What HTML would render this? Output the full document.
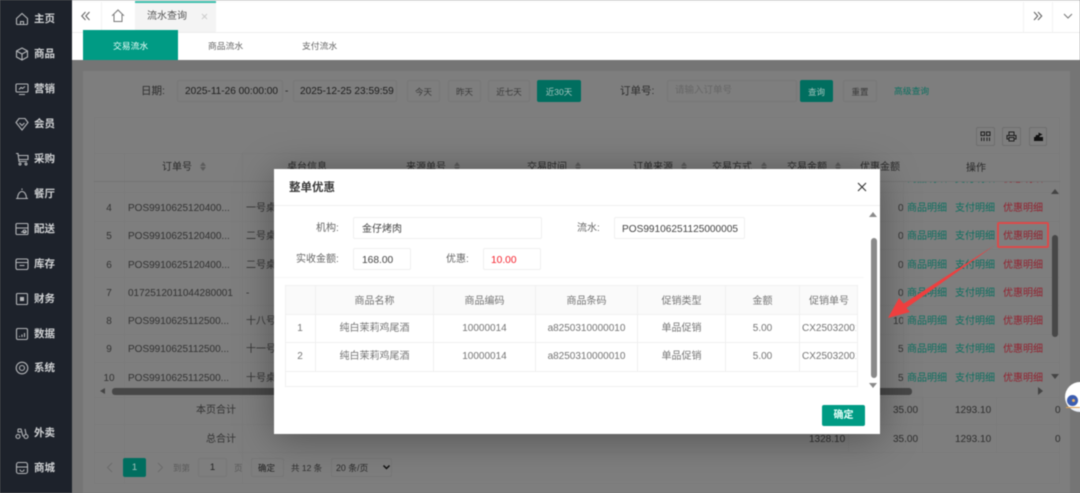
<!DOCTYPE html>
<html lang="zh"><head><meta charset="utf-8"><title>流水查询</title>
<style>
*{box-sizing:border-box;margin:0;padding:0}
html,body{width:1080px;height:493px;overflow:hidden;background:#767676}
body{position:relative;font-family:"Liberation Sans","Noto Sans CJK SC",sans-serif;font-size:10px;color:#2c2c2c;filter:blur(.5px)}
.a{position:absolute}
.t{position:absolute;white-space:nowrap;line-height:14px;height:14px;margin-top:1px}
.c{position:absolute;white-space:nowrap;text-align:center;line-height:14px;height:14px;margin-top:1px}
.box{position:absolute;border:1px solid #777;border-radius:2px}
.l{position:absolute;background:#7a7a7a}
.s{position:absolute;left:0;top:0;width:72px;height:493px;background:#1d222b}
.n{position:absolute;left:34px;color:#d0d2d4;font-size:10.5px;font-weight:bold;line-height:14px;white-space:nowrap}
.s svg{position:absolute;left:15px;width:14px;height:14px;fill:none;stroke:#b4b6b9;stroke-width:1.1}
.g{color:#0d6f60}.r{color:#92222f}
.m .t,.m .c{color:#757575;margin-top:2px}
.rw .t,.rw .c,.d{margin-top:2px!important}
.m .box{border-color:#f0f0f0}
.m .l{background:#f0f0f0}
.sort{position:absolute;width:0;height:0;border-left:3px solid transparent;border-right:3px solid transparent;border-bottom:4px solid #5c5c5c;margin-top:-1px}
.sort:after{content:"";position:absolute;left:-3px;top:5px;width:0;height:0;border-left:3px solid transparent;border-right:3px solid transparent;border-top:4px solid #5c5c5c}
</style></head><body>

<!-- top bars -->
<div class="a" style="left:72px;top:0;width:1008px;height:60px;background:#fff"></div>
<div class="a" style="left:72px;top:32px;width:1008px;height:1px;background:#eee"></div>
<div class="a" style="left:72px;top:1px;width:1008px;height:1px;background:#f7f7f7"></div>
<div class="a" style="left:101px;top:2px;width:1px;height:30px;background:#f3f3f3"></div>
<svg class="a" style="left:80px;top:10px" width="12" height="12" fill="none" stroke="#666" stroke-width="1.1"><path d="M5.5 2 1.8 6l3.7 4M9.5 2 5.8 6l3.7 4"/></svg>
<svg class="a" style="left:111px;top:9px" width="14" height="14" fill="none" stroke="#777" stroke-width="1"><path d="M1 6.8 7 1l6 5.8M3 5.5V12.500h8V5.500"/></svg>
<div class="a" style="left:135px;top:1px;width:81px;height:31px;background:#f4f4f4;border-top:2px solid #3cbcaa"></div>
<div class="t" style="left:147px;top:9px;color:#555;font-size:10px">流水查询</div>
<svg class="a" style="left:201px;top:13px" width="7" height="7" stroke="#ccc" stroke-width="1"><path d="M1 1l5 5M6 1 1 6"/></svg>
<div class="a" style="left:1023px;top:2px;width:1px;height:30px;background:#f3f3f3"></div>
<div class="a" style="left:1052px;top:2px;width:1px;height:30px;background:#f3f3f3"></div>
<svg class="a" style="left:1032px;top:10px" width="12" height="12" fill="none" stroke="#666" stroke-width="1.1"><path d="M2 2l3.700 4L2 10M6 2l3.700 4L6 10"/></svg>
<svg class="a" style="left:1062px;top:12px" width="12" height="8" fill="none" stroke="#777" stroke-width="1"><path d="M2 2l4 4 4-4"/></svg>
<div class="a" style="left:83px;top:30px;width:95px;height:30px;background:#009b84"></div>
<div class="t" style="left:113px;top:38px;color:#eafff9;font-size:8.800px">交易流水</div>
<div class="t" style="left:208px;top:38px;color:#666;font-size:8.800px">商品流水</div>
<div class="t" style="left:302px;top:38px;color:#666;font-size:8.800px">支付流水</div>

<!-- page -->
<div class="a" style="left:72px;top:60px;width:1008px;height:433px;background:#757575"></div>
<div class="a" style="left:83px;top:71px;width:987px;height:422px;background:#7e7e7e"></div>
<div class="t" style="left:141px;top:83px;font-size:10.500px;color:#2c2c2c">日期:</div>
<div class="box" style="left:177px;top:80px;width:106px;height:22px"></div>
<div class="t" style="left:185px;top:83.500px;font-size:10.100px;color:#1c1c1c">2025-11-26 00:00:00</div>
<div class="t" style="left:285px;top:83.500px;color:#222">-</div>
<div class="box" style="left:293px;top:80px;width:104px;height:22px"></div>
<div class="t" style="left:300px;top:83.500px;font-size:10.100px;color:#1c1c1c">2025-12-25 23:59:59</div>
<div class="box" style="left:407px;top:80px;width:33px;height:22px"></div><div class="c" style="left:407px;top:84px;width:33px;font-size:8.500px;color:#3a3a3a">今天</div>
<div class="box" style="left:448px;top:80px;width:33px;height:22px"></div><div class="c" style="left:448px;top:84px;width:33px;font-size:8.500px;color:#3a3a3a">昨天</div>
<div class="box" style="left:488px;top:80px;width:42px;height:22px"></div><div class="c" style="left:488px;top:84px;width:42px;font-size:8.500px;color:#3a3a3a">近七天</div>
<div class="a" style="left:537px;top:80px;width:44px;height:22px;background:#006e5f;border-radius:2px"></div><div class="c" style="left:537px;top:84px;width:44px;font-size:8.500px;color:#a4c4be">近30天</div>
<div class="t" style="left:620px;top:83px;font-size:10.500px;color:#2c2c2c">订单号:</div>
<div class="box" style="left:667px;top:80px;width:130px;height:22px"></div>
<div class="t" style="left:675px;top:83px;color:#666;font-size:9.500px">请输入订单号</div>
<div class="a" style="left:800px;top:80px;width:33px;height:22px;background:#006e5f;border-radius:2px"></div><div class="c" style="left:800px;top:84px;width:33px;font-size:8.500px;color:#a4c4be">查询</div>
<div class="box" style="left:843px;top:80px;width:34px;height:22px"></div><div class="c" style="left:843px;top:84px;width:34px;font-size:8.500px;color:#3a3a3a">重置</div>
<div class="t" style="left:894px;top:83px;font-size:8.800px;color:#0d6f60">高级查询</div>

<div class="a" style="left:94px;top:117px;width:966px;height:367px;border:1px solid #7a7a7a"></div>
<div class="box" style="left:976px;top:127px;width:19px;height:19px;border-color:#6e6e6e"></div>
<svg class="a" style="left:980px;top:131px" width="11" height="11" fill="none" stroke="#1d1d1d" stroke-width="1"><path d="M1 1h3.500v3.500H1zM6.500 1H10v3.500H6.500zM1.500 6.500V10M4 6.500V10M7 6.500V10M9.500 6.500V10"/></svg>
<div class="box" style="left:1002px;top:127px;width:19px;height:19px;border-color:#6e6e6e"></div>
<svg class="a" style="left:1006px;top:131px" width="11" height="11" fill="none" stroke="#1d1d1d" stroke-width="1"><path d="M3 4V1h5v3M3 8H1V4.500h9V8H8M3 6.500h5V10H3z"/></svg>
<div class="box" style="left:1029px;top:127px;width:18px;height:19px;border-color:#6e6e6e"></div>
<svg class="a" style="left:1033px;top:130px" width="11" height="12" fill="#111"><path d="M1 7h9v4H1zM2.500 7 3 5h2.500V2.500L9.500 4.500 6.500 6v1z"/></svg>

<!-- table header -->
<div class="l" style="left:94px;top:153px;width:966px;height:1px"></div>
<div class="l" style="left:124px;top:153px;width:1px;height:330px"></div>
<div class="l" style="left:242px;top:153px;width:1px;height:330px"></div>
<div class="t d" style="left:162px;top:159px;color:#2a2a2a">订单号</div><div class="sort" style="left:200px;top:163px"></div>
<div class="t d" style="left:287px;top:159px;color:#2a2a2a">桌台信息</div>
<div class="t d" style="left:406px;top:159px;color:#2a2a2a">来源单号</div><div class="sort" style="left:454px;top:163px"></div>
<div class="t d" style="left:527px;top:159px;color:#2a2a2a">交易时间</div><div class="sort" style="left:575px;top:163px"></div>
<div class="t d" style="left:633px;top:159px;color:#2a2a2a">订单来源</div><div class="sort" style="left:681px;top:163px"></div>
<div class="t d" style="left:712px;top:159px;color:#2a2a2a">交易方式</div><div class="sort" style="left:761px;top:163px"></div>
<div class="t d" style="left:787px;top:159px;color:#2a2a2a">交易金额</div><div class="sort" style="left:835px;top:163px"></div>
<div class="t d" style="left:860px;top:159px;color:#2a2a2a">优惠金额</div>
<div class="t d" style="left:966px;top:160px;color:#2a2a2a">操作</div>
<div class="l" style="left:94px;top:181px;width:966px;height:1px;background:#747474"></div>

<!-- rows -->
<div class="a rw" style="left:94px;top:182px;width:966px;height:203px;overflow:hidden">
 <div class="l" style="left:0;top:10px;width:966px;height:1px"></div>
 <div class="l" style="left:0;top:39px;width:966px;height:1px"></div>
 <div class="l" style="left:0;top:67px;width:966px;height:1px"></div>
 <div class="l" style="left:0;top:95px;width:966px;height:1px"></div>
 <div class="l" style="left:0;top:123px;width:966px;height:1px"></div>
 <div class="l" style="left:0;top:152px;width:966px;height:1px"></div>
 <div class="l" style="left:0;top:180px;width:966px;height:1px"></div>
 <div class="t" style="left:34px;top:-12px;color:#3a3a3a">POS9910625120400...</div>
 <div class="c" style="left:0;top:18px;width:30px;color:#333">4</div><div class="t" style="left:34px;top:18px;color:#333">POS9910625120400...</div><div class="t" style="left:152px;top:18px;color:#333">一号桌</div>
 <div class="c" style="left:0;top:46px;width:30px;color:#333">5</div><div class="t" style="left:34px;top:46px;color:#333">POS9910625120400...</div><div class="t" style="left:152px;top:46px;color:#333">二号桌</div>
 <div class="c" style="left:0;top:75px;width:30px;color:#333">6</div><div class="t" style="left:34px;top:75px;color:#333">POS9910625120400...</div><div class="t" style="left:152px;top:75px;color:#333">二号桌</div>
 <div class="c" style="left:0;top:103px;width:30px;color:#333">7</div><div class="t" style="left:34px;top:103px;color:#333">0172512011044280001</div><div class="t" style="left:152px;top:103px;color:#333">-</div>
 <div class="c" style="left:0;top:131px;width:30px;color:#333">8</div><div class="t" style="left:34px;top:131px;color:#333">POS9910625112500...</div><div class="t" style="left:152px;top:131px;color:#333">十八号桌</div>
 <div class="c" style="left:0;top:159px;width:30px;color:#333">9</div><div class="t" style="left:34px;top:159px;color:#333">POS9910625112500...</div><div class="t" style="left:152px;top:159px;color:#333">十一号桌</div>
 <div class="c" style="left:0;top:188px;width:30px;color:#333">10</div><div class="t" style="left:34px;top:188px;color:#333">POS9910625112500...</div><div class="t" style="left:152px;top:188px;color:#333">十号桌</div>
 <div class="t" style="left:804px;top:18px;color:#333">0</div><div class="t" style="left:804px;top:46px;color:#333">0</div><div class="t" style="left:804px;top:75px;color:#333">0</div><div class="t" style="left:804px;top:103px;color:#333">0</div><div class="t" style="left:799px;top:131px;color:#333">10</div><div class="t" style="left:804px;top:159px;color:#333">5</div><div class="t" style="left:804px;top:188px;color:#333">5</div>
 <div class="a" style="left:809px;top:-2px;width:148px;height:205px;background:#7e7e7e;border-left:1px solid #7a7a7a"></div>
 <div class="l" style="left:810px;top:10px;width:147px;height:1px"></div>
 <div class="l" style="left:810px;top:39px;width:147px;height:1px"></div>
 <div class="l" style="left:810px;top:67px;width:147px;height:1px"></div>
 <div class="l" style="left:810px;top:95px;width:147px;height:1px"></div>
 <div class="l" style="left:810px;top:123px;width:147px;height:1px"></div>
 <div class="l" style="left:810px;top:152px;width:147px;height:1px"></div>
 <div class="l" style="left:810px;top:180px;width:147px;height:1px"></div>
 <div class="t g" style="left:813px;top:-11px">商品明细</div><div class="t g" style="left:861px;top:-11px">支付明细</div><div class="t r" style="left:909px;top:-11px">优惠明细</div>
 <div class="t g" style="left:813px;top:18px">商品明细</div><div class="t g" style="left:861px;top:18px">支付明细</div><div class="t r" style="left:909px;top:18px">优惠明细</div>
 <div class="t g" style="left:813px;top:46px">商品明细</div><div class="t g" style="left:861px;top:46px">支付明细</div><div class="t r" style="left:909px;top:46px">优惠明细</div>
 <div class="t g" style="left:813px;top:75px">商品明细</div><div class="t g" style="left:861px;top:75px">支付明细</div><div class="t r" style="left:909px;top:75px">优惠明细</div>
 <div class="t g" style="left:813px;top:103px">商品明细</div><div class="t g" style="left:861px;top:103px">支付明细</div><div class="t r" style="left:909px;top:103px">优惠明细</div>
 <div class="t g" style="left:813px;top:131px">商品明细</div><div class="t g" style="left:861px;top:131px">支付明细</div><div class="t r" style="left:909px;top:131px">优惠明细</div>
 <div class="t g" style="left:813px;top:159px">商品明细</div><div class="t g" style="left:861px;top:159px">支付明细</div><div class="t r" style="left:909px;top:159px">优惠明细</div>
 <div class="t g" style="left:813px;top:188px">商品明细</div><div class="t g" style="left:861px;top:188px">支付明细</div><div class="t r" style="left:909px;top:188px">优惠明细</div>
</div>

<!-- table scrollbars -->
<div class="a" style="left:1052px;top:235px;width:6px;height:102px;background:#474747;border-radius:3px"></div>
<div class="a" style="left:1051px;top:189px;width:0;height:0;border-left:4px solid transparent;border-right:4px solid transparent;border-bottom:5px solid #444"></div>
<div class="a" style="left:1051px;top:374px;width:0;height:0;border-left:4px solid transparent;border-right:4px solid transparent;border-top:5px solid #444"></div>
<div class="a" style="left:112px;top:388px;width:800px;height:7px;background:#474747;border-radius:3px"></div>
<div class="a" style="left:100px;top:388px;width:0;height:0;border-top:3.500px solid transparent;border-bottom:3.500px solid transparent;border-right:5px solid #444"></div>
<div class="a" style="left:1038px;top:387px;width:0;height:0;border-top:4px solid transparent;border-bottom:4px solid transparent;border-left:5px solid #444"></div>

<!-- totals -->
<div class="l" style="left:94px;top:397px;width:966px;height:1px"></div>
<div class="l" style="left:94px;top:424px;width:966px;height:1px"></div>
<div class="l" style="left:94px;top:452px;width:966px;height:1px"></div>
<div class="l" style="left:922px;top:397px;width:1px;height:55px"></div>
<div class="l" style="left:996px;top:397px;width:1px;height:55px"></div>
<div class="l" style="left:848px;top:397px;width:1px;height:55px"></div>
<div class="t d" style="left:196px;top:402px;color:#333;width:40px;text-align:right">本页合计</div>
<div class="t d" style="left:196px;top:431px;color:#333;width:40px;text-align:right">总合计</div>
<div class="t d" style="left:893px;top:402px;color:#2e2e2e">35.00</div><div class="t d" style="left:955px;top:402px;color:#2e2e2e">1293.10</div><div class="t d" style="left:1055px;top:402px;color:#2e2e2e">0</div>
<div class="t d" style="left:809px;top:431px;color:#2e2e2e">1328.10</div><div class="t d" style="left:893px;top:431px;color:#2e2e2e">35.00</div><div class="t d" style="left:955px;top:431px;color:#2e2e2e">1293.10</div><div class="t d" style="left:1055px;top:431px;color:#2e2e2e">0</div>

<!-- pagination -->
<svg class="a" style="left:106px;top:462px" width="8" height="11" fill="none" stroke="#6b6b6b" stroke-width="1"><path d="M6 1 1.500 5.500 6 10"/></svg>
<div class="a" style="left:123px;top:458px;width:23px;height:19px;background:#006e5f;border-radius:2px"></div><div class="c" style="left:123px;top:460px;width:23px;font-size:9.500px;color:#a4c4be">1</div>
<svg class="a" style="left:156px;top:462px" width="8" height="11" fill="none" stroke="#6b6b6b" stroke-width="1"><path d="M2 1l4.500 4.500L2 10"/></svg>
<div class="t" style="left:173px;top:460px;font-size:8.500px;color:#5a5a5a">到第</div>
<div class="box" style="left:198px;top:458px;width:29px;height:19px"></div><div class="c" style="left:198px;top:460px;width:29px;font-size:9.500px;color:#222">1</div>
<div class="t" style="left:234px;top:460px;font-size:8.500px;color:#5a5a5a">页</div>
<div class="box" style="left:251px;top:458px;width:33px;height:19px"></div><div class="c" style="left:251px;top:460px;width:31px;font-size:8.500px;color:#222">确定</div>
<div class="t" style="left:291px;top:460px;font-size:8.500px;color:#2e2e2e">共 12 条</div>
<div class="box" style="left:331px;top:458px;width:61px;height:19px"></div>
<div class="t" style="left:336px;top:460px;font-size:8.800px;color:#2a2a2a">20 条/页</div>
<svg class="a" style="left:382px;top:464px" width="9" height="7" fill="none" stroke="#111" stroke-width="1.500"><path d="M1.500 1.500 4.500 4.500 7.500 1.500"/></svg>

<!-- blob -->
<div class="a" style="left:1065px;top:382px;width:30px;height:30px;border-radius:50%;background:radial-gradient(circle at 45% 35%,#fff 55%,#c8d4ea)"></div>
<div class="a" style="left:1067px;top:395px;width:11px;height:11px;border-radius:50%;background:#3c5db0"></div>
<div class="a" style="left:1072px;top:399px;width:3px;height:3px;border-radius:50%;background:#e8b060"></div>
<div class="a" style="left:1066px;top:407px;width:14px;height:1px;background:#e0a050"></div>

<!-- modal -->
<div class="a m" style="left:274px;top:169px;width:606px;height:265px;background:#fff;box-shadow:0 4px 36px rgba(0,0,0,.35)">
 <div class="t" style="left:15px;top:12px;font-size:11.500px;font-weight:bold;color:#3a3a3a;margin-top:0">整单优惠</div>
 <div class="l" style="left:0;top:36px;width:606px;height:1px"></div>
 <svg class="a" style="left:583px;top:13px" width="10" height="10" stroke="#333" stroke-width="1.100"><path d="M1 1l8 8M9 1 1 9"/></svg>
 <div class="t" style="left:42px;top:51px;font-size:10px;color:#666">机构:</div>
 <div class="box" style="left:79px;top:48px;width:189px;height:22px"></div>
 <div class="t" style="left:88px;top:52px;color:#444">金仔烤肉</div>
 <div class="t" style="left:303px;top:51px;color:#666">流水:</div>
 <div class="box" style="left:340px;top:48px;width:131px;height:22px"></div>
 <div class="t" style="left:348px;top:51.500px;font-size:10.100px;color:#444">POS99106251125000005</div>
 <div class="t" style="left:22px;top:82px;color:#666">实收金额:</div>
 <div class="box" style="left:79px;top:79px;width:58px;height:22px"></div>
 <div class="t" style="left:88px;top:82.500px;font-size:10.200px;color:#444">168.00</div>
 <div class="t" style="left:172px;top:82px;color:#666">优惠:</div>
 <div class="box" style="left:209px;top:79px;width:58px;height:22px"></div>
 <div class="t" style="left:217px;top:82.500px;font-size:10.200px;color:#f5222d">10.00</div>
 <div class="l" style="left:0;top:108px;width:590px;height:1px;background:#f7f7f7"></div>

 <div class="a" style="left:11px;top:116px;width:573px;height:102px;border:1px solid #f0f0f0"></div>
 <div class="a" style="left:12px;top:117px;width:571px;height:28px;background:#fafafa"></div>
 <div class="l" style="left:11px;top:145px;width:573px;height:1px"></div>
 <div class="l" style="left:11px;top:173px;width:573px;height:1px"></div>
 <div class="l" style="left:11px;top:202px;width:573px;height:1px"></div>
 <div class="l" style="left:41px;top:116px;width:1px;height:86px"></div>
 <div class="l" style="left:159px;top:116px;width:1px;height:86px"></div>
 <div class="l" style="left:261px;top:116px;width:1px;height:86px"></div>
 <div class="l" style="left:363px;top:116px;width:1px;height:86px"></div>
 <div class="l" style="left:451px;top:116px;width:1px;height:86px"></div>
 <div class="l" style="left:525px;top:116px;width:1px;height:86px"></div>

 <div class="c" style="left:42px;top:124px;width:117px">商品名称</div><div class="c" style="left:160px;top:124px;width:101px">商品编码</div><div class="c" style="left:262px;top:124px;width:101px">商品条码</div><div class="c" style="left:364px;top:124px;width:87px">促销类型</div><div class="c" style="left:452px;top:124px;width:73px">金额</div><div class="c" style="left:526px;top:124px;width:58px">促销单号</div>

 <div class="c" style="left:11px;top:151px;width:30px">1</div><div class="c" style="left:42px;top:151px;width:117px">纯白茉莉鸡尾酒</div><div class="c" style="left:160px;top:151px;width:101px">10000014</div><div class="c" style="left:262px;top:151px;width:101px">a8250310000010</div><div class="c" style="left:364px;top:151px;width:87px">单品促销</div><div class="c" style="left:452px;top:151px;width:73px">5.00</div>
 <div class="a" style="left:528px;top:151px;width:53.500px;height:18px;overflow:hidden"><div class="t" style="left:0;top:0">CX25032001</div></div>

 <div class="c" style="left:11px;top:179px;width:30px">2</div><div class="c" style="left:42px;top:179px;width:117px">纯白茉莉鸡尾酒</div><div class="c" style="left:160px;top:179px;width:101px">10000014</div><div class="c" style="left:262px;top:179px;width:101px">a8250310000010</div><div class="c" style="left:364px;top:179px;width:87px">单品促销</div><div class="c" style="left:452px;top:179px;width:73px">5.00</div>
 <div class="a" style="left:528px;top:179px;width:53.500px;height:18px;overflow:hidden"><div class="t" style="left:0;top:0">CX25032001</div></div>

 <div class="a" style="left:595px;top:43px;width:0;height:0;border-left:4px solid transparent;border-right:4px solid transparent;border-bottom:5px solid #8a8a8a"></div>
 <div class="a" style="left:597px;top:69px;width:6px;height:140px;background:#8a8a8a;border-radius:3px"></div>
 <div class="a" style="left:595px;top:214px;width:0;height:0;border-left:4px solid transparent;border-right:4px solid transparent;border-top:5px solid #8a8a8a"></div>
 <div class="a" style="left:548px;top:236px;width:43px;height:21px;background:#009b84;border-radius:2px"></div>
 <div class="c" style="left:548px;top:238px;width:43px;color:#e6fff9;font-size:10px;font-weight:bold">确定</div>
</div>

<!-- annotation -->
<div class="a" style="left:997px;top:222px;width:52px;height:26px;border:2px solid #dd4a4a;border-radius:2px"></div>
<svg class="a" style="left:880px;top:240px" width="120" height="85"><path d="M115 5 26.400 68 30 72 8 78 19 58 23.600 63.600z" fill="#ee3f3f"/></svg>

<!-- sidebar -->
<div class="s">
 <svg style="top:12px" viewBox="0 0 14 14"><path d="M1.500 6.500 7 1.500l5.500 5v5a1 1 0 0 1-1 1h-9a1 1 0 0 1-1-1zM5.500 12.500V9.500h3v3"/></svg><div class="n" style="top:12px">主页</div>
 <svg style="top:47px" viewBox="0 0 14 14"><path d="M7 1l5.500 3v6L7 13l-5.500-3V4zM1.500 4 7 7l5.500-3M7 7v6"/></svg><div class="n" style="top:47px">商品</div>
 <svg style="top:82px" viewBox="0 0 14 14"><path d="M2 2h10a1 1 0 0 1 1 1v6a1 1 0 0 1-1 1H2a1 1 0 0 1-1-1V3a1 1 0 0 1 1-1zM4 12.500h6M4 7.500l2-2 1.500 1L10 4.500"/></svg><div class="n" style="top:82px">营销</div>
 <svg style="top:117px" viewBox="0 0 14 14"><path d="M4 1.500h6L13 5.500 7 13 1 5.500zM4.500 6 7 8.500 9.500 6"/></svg><div class="n" style="top:117px">会员</div>
 <svg style="top:152px" viewBox="0 0 14 14"><path d="M1 1.500h2l1 8h8M3.200 3.500H13v4H3.700"/><circle cx="5" cy="12" r="1"/><circle cx="11" cy="12" r="1"/></svg><div class="n" style="top:152px">采购</div>
 <svg style="top:187px" viewBox="0 0 14 14"><path d="M1 11.500h12M2.500 11.500 A4.500 7 0 0 1 11.500 11.500M7 3V1.500"/></svg><div class="n" style="top:187px">餐厅</div>
 <svg style="top:222px" viewBox="0 0 14 14"><path d="M2 1.500h10a1 1 0 0 1 1 1v9a1 1 0 0 1-1 1H2a1 1 0 0 1-1-1v-9a1 1 0 0 1 1-1zM1 6h12M6 10h6"/><circle cx="9.500" cy="9.500" r="1.500"/></svg><div class="n" style="top:222px">配送</div>
 <svg style="top:257px" viewBox="0 0 14 14"><path d="M2.500 2h9a1.500 1.500 0 0 1 1.500 1.500V11a1.500 1.500 0 0 1-1.500 1.500h-9A1.500 1.500 0 0 1 1 11V3.500A1.500 1.500 0 0 1 2.500 2zM1 5.500h12M4.500 8.500h5"/></svg><div class="n" style="top:257px">库存</div>
 <svg style="top:292px" viewBox="0 0 14 14"><rect x="1.500" y="1.500" width="11" height="11" rx="1"/><rect x="5.500" y="5.500" width="3" height="3" fill="#b4b6b9"/></svg><div class="n" style="top:292px">财务</div>
 <svg style="top:327px" viewBox="0 0 14 14"><rect x="1.500" y="1.500" width="11" height="11" rx="1.500"/><path d="M4.500 10V9M7 10V7.500M9.500 10V6"/></svg><div class="n" style="top:327px">数据</div>
 <svg style="top:361px" viewBox="0 0 14 14"><circle cx="7" cy="7" r="5.800"/><circle cx="7" cy="7" r="2.500"/></svg><div class="n" style="top:361px">系统</div>
 <svg style="top:426px" viewBox="0 0 14 14"><circle cx="3" cy="10.500" r="2"/><circle cx="11" cy="10.500" r="2"/><path d="M3 3h3l2 7.500M3 3v3h3M10 3l1 5"/></svg><div class="n" style="top:426px">外卖</div>
 <svg style="top:461px" viewBox="0 0 14 14"><rect x="1.500" y="1.500" width="11" height="11" rx="2"/><path d="M1.500 6h11M5 8.500a2 2 0 0 0 4 0"/></svg><div class="n" style="top:461px">商城</div>
</div>
</body></html>
